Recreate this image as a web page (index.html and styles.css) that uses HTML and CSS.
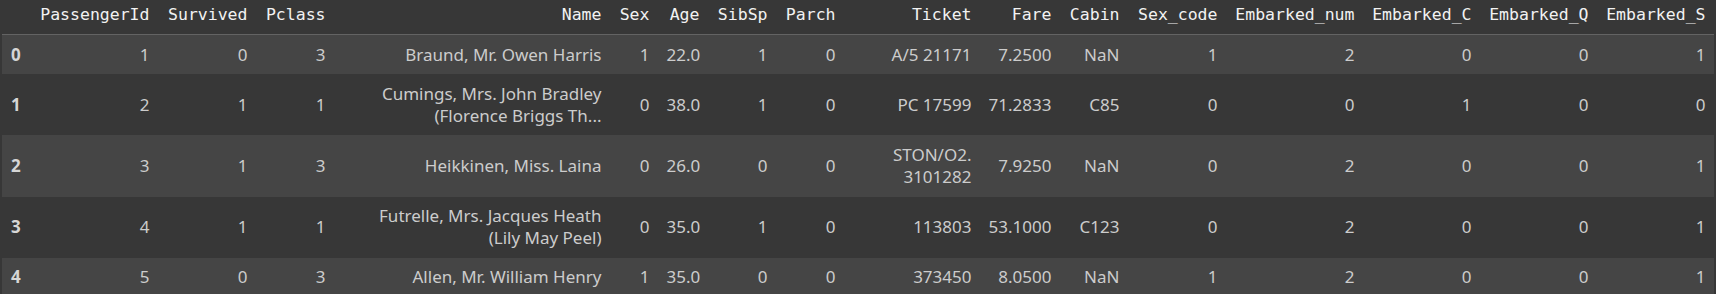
FILE: index.html
```html
<!DOCTYPE html>
<html lang="en">
<head>
<meta charset="utf-8">
<title>DataFrame</title>
<link rel="stylesheet" href="styles.css">
</head>
<body>
<div class="output">
<table class="dataframe">
  <thead>
    <tr>
      <th class="w-idx"></th>
      <th class="w-pid">PassengerId</th>
      <th class="w-surv">Survived</th>
      <th class="w-pclass">Pclass</th>
      <th class="w-name">Name</th>
      <th class="w-sex">Sex</th>
      <th class="w-age">Age</th>
      <th class="w-sibsp">SibSp</th>
      <th class="w-parch">Parch</th>
      <th class="w-ticket">Ticket</th>
      <th class="w-fare">Fare</th>
      <th class="w-cabin">Cabin</th>
      <th class="w-sexcode">Sex_code</th>
      <th class="w-embnum">Embarked_num</th>
      <th class="w-emb">Embarked_C</th>
      <th class="w-emb">Embarked_Q</th>
      <th class="w-emb">Embarked_S</th>
    </tr>
  </thead>
  <tbody>
    <tr>
      <th>0</th><td>1</td><td>0</td><td>3</td><td class="c-name">Braund, Mr. Owen Harris</td><td>1</td><td>22.0</td><td>1</td><td>0</td><td>A/5 21171</td><td>7.2500</td><td>NaN</td><td>1</td><td>2</td><td>0</td><td>0</td><td>1</td>
    </tr>
    <tr>
      <th>1</th><td>2</td><td>1</td><td>1</td><td class="c-name">Cumings, Mrs. John Bradley (Florence Briggs Th...</td><td>0</td><td>38.0</td><td>1</td><td>0</td><td>PC 17599</td><td>71.2833</td><td>C85</td><td>0</td><td>0</td><td>1</td><td>0</td><td>0</td>
    </tr>
    <tr>
      <th>2</th><td>3</td><td>1</td><td>3</td><td class="c-name">Heikkinen, Miss. Laina</td><td>0</td><td>26.0</td><td>0</td><td>0</td><td>STON/O2. 3101282</td><td>7.9250</td><td>NaN</td><td>0</td><td>2</td><td>0</td><td>0</td><td>1</td>
    </tr>
    <tr>
      <th>3</th><td>4</td><td>1</td><td>1</td><td class="c-name">Futrelle, Mrs. Jacques Heath (Lily May Peel)</td><td>0</td><td>35.0</td><td>1</td><td>0</td><td>113803</td><td>53.1000</td><td>C123</td><td>0</td><td>2</td><td>0</td><td>0</td><td>1</td>
    </tr>
    <tr>
      <th>4</th><td>5</td><td>0</td><td>3</td><td class="c-name">Allen, Mr. William Henry</td><td>1</td><td>35.0</td><td>0</td><td>0</td><td>373450</td><td>8.0500</td><td>NaN</td><td>1</td><td>2</td><td>0</td><td>0</td><td>1</td>
    </tr>
  </tbody>
</table>
</div>
</body>
</html>
```

FILE: styles.css
```css
html, body {
  margin: 0;
  padding: 0;
  background: #373737;
}

.output {
  padding: 0 2px;
}

.dataframe {
  width: 1712px;
  table-layout: fixed;
  border-collapse: collapse;
  border-spacing: 0;
  color: #cccccc;
  font-family: "Noto Sans", "Open Sans", sans-serif;
  font-size: 17px;
  line-height: 22px;
}

.dataframe th,
.dataframe td {
  box-sizing: border-box;
  text-align: right;
  vertical-align: middle;
  padding: 8.6px 8.5px 8.6px 8.5px;
  white-space: normal;
}

.dataframe thead th {
  font-family: "DejaVu Sans Mono", "Liberation Mono", monospace;
  font-size: 16.5px;
  font-weight: normal;
  color: #f2f2f2;
  padding-top: 3.6px;
  padding-bottom: 8.4px;
  border-bottom: 1px solid #636363;
  white-space: nowrap;
}

.dataframe tbody th {
  text-align: left;
  font-weight: bold;
  color: #d6d6d6;
  padding-left: 9px;
}

.dataframe td.c-name {
  padding-left: 32px;
}

.dataframe tbody tr:nth-child(odd) {
  background: #454545;
}

.w-idx { width: 28px; }
.w-pid { width: 128px; }
.w-surv { width: 98px; }
.w-pclass { width: 78px; }
.w-name { width: 276px; }
.w-sex { width: 48px; }
.w-age { width: 50px; }
.w-sibsp { width: 68px; }
.w-parch { width: 68px; }
.w-ticket { width: 136px; }
.w-fare { width: 80px; }
.w-cabin { width: 68px; }
.w-sexcode { width: 98px; }
.w-embnum { width: 137px; }
.w-emb { width: 117px; }
```
